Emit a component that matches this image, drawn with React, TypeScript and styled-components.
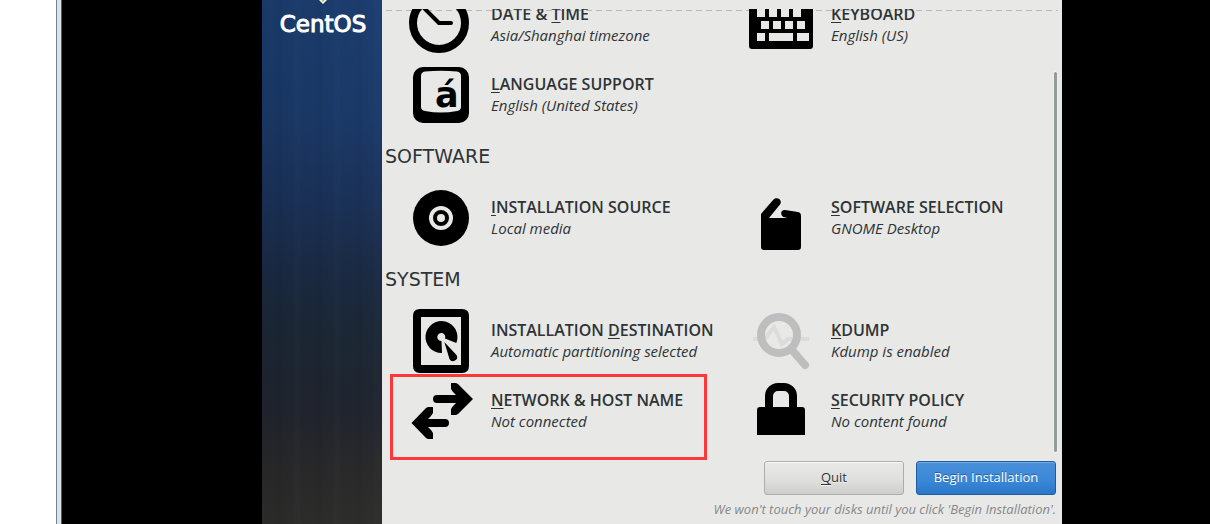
import React from "react";
import styled, { createGlobalStyle } from "styled-components";

const sans = `"Open Sans", "Noto Sans", sans-serif`;

const GlobalStyle = createGlobalStyle`
  *, *::before, *::after { box-sizing: border-box; }
  body { margin: 0; background: #000; font-family: ${sans}; color: #2e3436; }
`;

const Viewport = styled.div`
  display: grid;
  grid-template-columns: 56px 6px minmax(0, 1fr);
  min-height: 100vh;
`;

const Gutter = styled.div`
  background: #fff;
`;

const WindowEdge = styled.div`
  background: #dde2e8;
  border-left: 1px solid #75808f;
  border-right: 1px solid #555b60;
`;

const Console = styled.div`
  display: grid;
  padding: 0 148px 0 200px;
  background: #000;
`;

const Installer = styled.div`
  display: grid;
  grid-template-columns: 120px minmax(0, 1fr);
`;

const Sidebar = styled.aside`
  display: flex;
  flex-direction: column;
  align-items: center;
  padding-left: 2px;
  background:
    repeating-linear-gradient(90deg, transparent 0 13px, rgba(0, 0, 0, 0.03) 15px 19px, transparent 22px 31px, rgba(255, 255, 255, 0.01) 33px 37px, transparent 40px),
    linear-gradient(90deg, rgba(0, 0, 0, 0.08), transparent),
    linear-gradient(180deg, #1c3e70 0, #1b3a69 120px, #1b3259 200px, #1b2b45 270px, #1c2836 330px, #21252f 410px, #2a2a2b 470px, #2e2e2d 524px);
`;

const Brand = styled.div`
  display: flex;
  flex-direction: column;
  align-items: center;
  color: #fff;
  font: 23px/30px "DejaVu Sans", sans-serif;
  -webkit-text-stroke: 1px #fff;
`;

const Main = styled.main`
  display: flex;
  flex-direction: column;
  min-width: 0;
  padding-top: 9px;
  background: #e8e8e6;
`;

const Scroller = styled.div`
  position: relative;
  height: 452px;
  overflow: hidden;
`;

const ScrollEdge = styled.div`
  position: absolute;
  top: 1px;
  left: 4px;
  right: 4px;
  height: 1px;
  background: repeating-linear-gradient(90deg, #babcba 0 6px, transparent 6px 10px);
`;

const ScrollThumb = styled.div`
  position: absolute;
  top: 63px;
  right: 5px;
  width: 3px;
  height: 380px;
  border-radius: 2px;
  background: #959a9b;
  box-shadow: 0 0 0 1px #f0f0ef;
`;

const Categories = styled.div`
  position: relative;
  margin-top: -16px;
`;

const Heading = styled.h2`
  margin: 17px 0 18px;
  padding-left: 3px;
  font: 19px/24px "DejaVu Sans", sans-serif;
`;

const Spokes = styled.div`
  display: grid;
  grid-template-columns: 1fr 1fr;
  row-gap: 6px;
`;

const Spoke = styled.button`
  position: relative;
  display: flex;
  align-items: center;
  gap: 18px;
  height: 64px;
  padding: 0 0 0 27px;
  border: 0;
  background: none;
  color: inherit;
  font-family: inherit;
  text-align: left;
  white-space: nowrap;
`;

const Icon = styled.svg`
  flex: none;
  width: 64px;
  height: 64px;
`;

const Labels = styled.span`
  display: flex;
  flex-direction: column;
`;

const Title = styled.span`
  font-size: 16px;
  font-weight: 600;
  line-height: 21px;
`;

const Status = styled.span`
  font-size: 15px;
  font-style: italic;
  line-height: 21px;
`;

const Mnemonic = styled.u`
  text-decoration-thickness: 1px;
  text-underline-offset: 2px;
`;

const Highlight = styled.span`
  position: absolute;
  top: -5px;
  left: 8px;
  width: 317px;
  height: 86px;
  border: 3px solid #fd3838;
`;

const Footer = styled.footer`
  display: flex;
  flex-direction: column;
  align-items: flex-end;
  gap: 5px;
  padding-right: 6px;
`;

const Actions = styled.div`
  display: flex;
  gap: 12px;
`;

const ActionButton = styled.button<{ $primary?: boolean }>`
  width: 140px;
  height: 34px;
  padding: 0 0 2px;
  border: 1px solid ${(p) => (p.$primary ? "#1f5c9f" : "#adaeab")};
  border-radius: 3px;
  background: ${(p) =>
    p.$primary
      ? "linear-gradient(#4a90d9, #3a87d8 60%, #2a76c6)"
      : "linear-gradient(#e9e9e8, #dededd 60%, #cdcdcb)"};
  box-shadow: inset 0 1px ${(p) => (p.$primary ? "#73abe4" : "#fafafa")};
  color: ${(p) => (p.$primary ? "#fff" : "#2e3436")};
  text-shadow: ${(p) => (p.$primary ? "0 -1px #22609f" : "0 1px #f4f4f3")};
  font: 13px/18px ${sans};
`;

const Note = styled.p`
  margin: 0;
  color: #858889;
  font-size: 13px;
  font-style: italic;
  line-height: 18px;
  white-space: nowrap;
`;

const paper = "#e8e8e6";

const icons: Record<string, React.ReactNode> = {
  clock: (
    <g fill="none" stroke="#000" strokeLinecap="round" strokeLinejoin="round">
      <circle cx="30" cy="30" r="26" strokeWidth="8" />
      <path d="M14 14L30 30H42" strokeWidth="4" />
    </g>
  ),
  keyboard: (
    <>
      <rect y="8" width="64" height="48" rx="3" />
      <path
        fill={paper}
        d="M8 16h8v8H8zM20 16h8v8h-8zM32 16h8v8h-8zM44 16h8v8h-8zM12 28h8v8h-8zM24 28h8v8h-8zM36 28h8v8h-8zM48 28h8v8h-8zM8 40h8v8H8zM20 40h24v8H20zM48 40h12v8H48z"
      />
    </>
  ),
  language: (
    <>
      <rect x="4" y="4" width="56" height="56" rx="10" />
      <path fill={paper} d="M12 13Q12 9 16 8.500Q32 7 48 8.500Q52 9 52 13V44Q52 47 48 48Q32 51 16 48Q12 47 12 44Z" />
      <text x="26" y="44" fontFamily="DejaVu Sans" fontWeight="700" fontSize="35">á</text>
    </>
  ),
  disc: (
    <>
      <circle cx="32" cy="32" r="28" />
      <circle cx="32" cy="32" r="10" fill="none" stroke={paper} strokeWidth="4" />
      <circle cx="32" cy="32" r="4" fill={paper} />
    </>
  ),
  bag: (
    <path d="M12 28L24.500 13.500C28 10 34 14 31 18.500L20 32H38.500L34.500 31C30.500 28.500 32 23.500 36 24L49 26Q52 26.500 52 30V61Q52 64 49 64H15Q12 64 12 61Z" />
  ),
  disk: (
    <>
      <path fillRule="evenodd" d="M11 0H53Q60 0 60 7V57Q60 64 53 64H11Q4 64 4 57V7Q4 0 11 0ZM12 8V56H52V8Z" />
      <path d="M47.300 34A16 16 0 1 0 33 44L32.500 32A4 4 0 1 1 36 29.500Z" />
      <path d="M35.300 33L47.500 46A4 4 0 1 1 40.500 50Z" />
    </>
  ),
  network: (
    <>
      <path d="M42 4H47L49 5L64 20L49 35L47 36H42V30L44 27L47 24H28A4 4 0 0 1 28 16H47L44 13L42 10Z" />
      <path d="M24 28H19L17 29L2.500 44L17 59L19 60H24V54L22 51L19 48H36A4 4 0 0 0 36 40H19L22 37L24 34Z" />
    </>
  ),
  kdump: (
    <g fill="none">
      <path d="M4 30H16L25 18L33 35L39 30H60" stroke="#dcdcdb" strokeWidth="4" />
      <circle cx="30" cy="26" r="18" stroke="#bebebe" strokeWidth="8" />
      <path d="M43 41L56 56" stroke="#bebebe" strokeWidth="8" strokeLinecap="round" />
    </g>
  ),
  lock: (
    <>
      <path d="M20 30V17A9 9 0 0 1 29 8H35A9 9 0 0 1 44 17V30" fill="none" stroke="#000" strokeWidth="8" />
      <path d="M8 56V31Q8 28 11 28H53Q56 28 56 31V56Z" />
    </>
  ),
};

type Item = { icon: string; title: [string, string, string]; status: string; marked?: boolean };

const localization: Item[] = [
  { icon: "clock", title: ["DATE & ", "T", "IME"], status: "Asia/Shanghai timezone" },
  { icon: "keyboard", title: ["", "K", "EYBOARD"], status: "English (US)" },
  { icon: "language", title: ["", "L", "ANGUAGE SUPPORT"], status: "English (United States)" },
];

const software: Item[] = [
  { icon: "disc", title: ["", "I", "NSTALLATION SOURCE"], status: "Local media" },
  { icon: "bag", title: ["", "S", "OFTWARE SELECTION"], status: "GNOME Desktop" },
];

const system: Item[] = [
  { icon: "disk", title: ["INSTALLATION ", "D", "ESTINATION"], status: "Automatic partitioning selected" },
  { icon: "kdump", title: ["", "K", "DUMP"], status: "Kdump is enabled" },
  { icon: "network", title: ["", "N", "ETWORK & HOST NAME"], status: "Not connected", marked: true },
  { icon: "lock", title: ["", "S", "ECURITY POLICY"], status: "No content found" },
];

function SpokeGroup({ items }: { items: Item[] }) {
  return (
    <Spokes>
      {items.map(({ icon, title, status, marked }) => (
        <Spoke key={icon} type="button">
          <Icon viewBox="0 0 64 64" aria-hidden="true">
            {icons[icon]}
          </Icon>
          <Labels>
            <Title>
              {title[0]}
              <Mnemonic>{title[1]}</Mnemonic>
              {title[2]}
            </Title>
            <Status>{status}</Status>
          </Labels>
          {marked && <Highlight />}
        </Spoke>
      ))}
    </Spokes>
  );
}

export default function App() {
  return (
    <>
      <GlobalStyle />
      <Viewport>
        <Gutter />
        <WindowEdge />
        <Console>
          <Installer>
            <Sidebar>
              <Brand>
                <svg width="16" height="9" viewBox="0 0 16 9" aria-hidden="true">
                  <path d="M2 -2L8 4L14 -2Z" fill="#fff" />
                  <path d="M5 -1.500L8 2L11 -1.500Z" fill="#9ccc2c" />
                </svg>
                CentOS
              </Brand>
            </Sidebar>
            <Main>
              <Scroller>
                <ScrollEdge />
                <Categories>
                  <SpokeGroup items={localization} />
                  <Heading>SOFTWARE</Heading>
                  <SpokeGroup items={software} />
                  <Heading>SYSTEM</Heading>
                  <SpokeGroup items={system} />
                </Categories>
                <ScrollThumb />
              </Scroller>
              <Footer>
                <Actions>
                  <ActionButton type="button">
                    <Mnemonic>Q</Mnemonic>uit
                  </ActionButton>
                  <ActionButton type="button" $primary>
                    Begin Installation
                  </ActionButton>
                </Actions>
                <Note>We won't touch your disks until you click 'Begin Installation'.</Note>
              </Footer>
            </Main>
          </Installer>
        </Console>
      </Viewport>
    </>
  );
}
